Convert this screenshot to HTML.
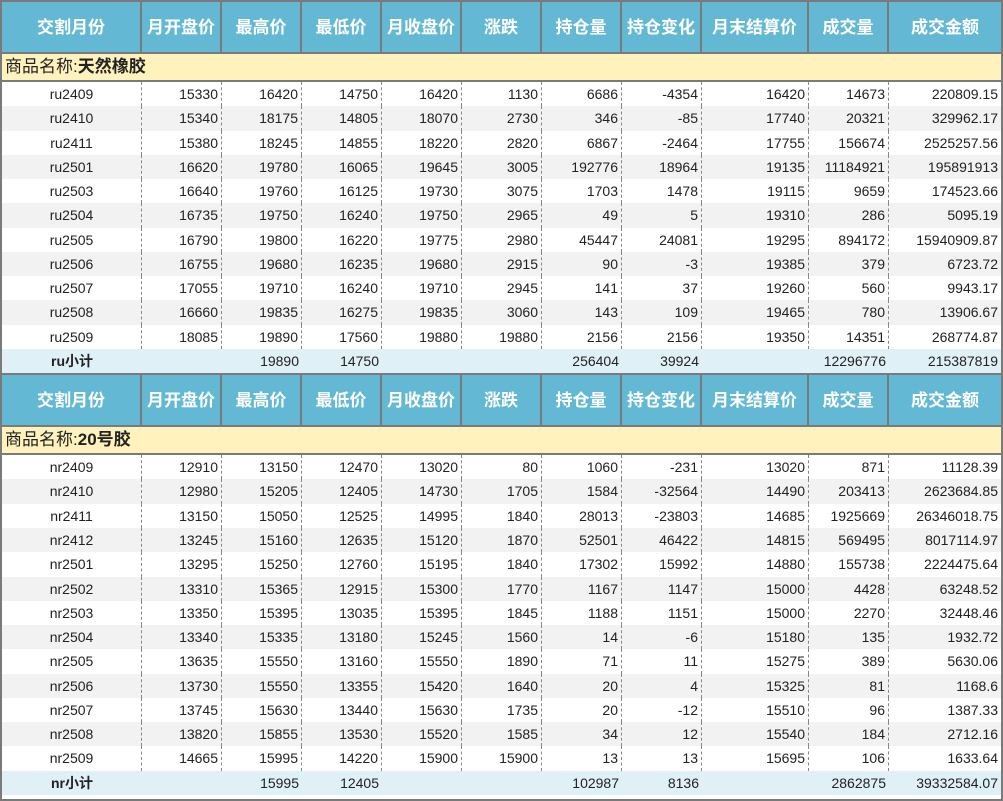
<!DOCTYPE html>
<html><head><meta charset="utf-8"><style>
*{margin:0;padding:0;box-sizing:border-box}
body{width:1003px;height:801px;overflow:hidden;background:#fff;font-family:"Liberation Sans","Noto Sans CJK SC",sans-serif}
.wrap{position:absolute;left:0;top:0;width:1003px;height:801px;border:2px solid #7a7a7a;border-bottom-width:2px}
.r{display:flex;width:999px}
.r>div{flex:none;height:100%;overflow:hidden;white-space:nowrap}
.c1{width:140px}.c{width:80px}.c9{width:107px}.c11{width:112px}
.h{height:52px;background:#63b8d3;border-bottom:2px solid #7a7a7a}
.h>div{color:#fff;font-weight:bold;font-size:17px;line-height:51px;text-align:center;border-right:2px solid #7a7a7a}
.h>div:last-child{border-right:none}
.p{height:28px;background:#fff2bd;border-bottom:2px solid #7a7a7a;font-size:17px;line-height:26px;padding-left:3px;color:#222}
.p b{font-weight:bold}
.d{height:24.27px;font-size:14px;line-height:24px;color:#222}
.d.s2{height:24.28px}
.d:nth-child(odd){background:#fff}
.d>div{text-align:right;padding-right:3px;border-right:1px dashed #888}
.d>div:first-child{text-align:center;padding-right:0}
.d>div:last-child{border-right:none}
.z{background:#f2f2f2!important}
.t{background:#dff0f7!important}
.t>div{border-right:none!important}
.t>div:first-child{font-weight:bold}
.sep{height:2px;background:#7a7a7a;width:999px}
</style></head><body><div class="wrap">
<div class="r h"><div class="c1">交割月份</div><div class="c">月开盘价</div><div class="c">最高价</div><div class="c">最低价</div><div class="c">月收盘价</div><div class="c">涨跌</div><div class="c">持仓量</div><div class="c">持仓变化</div><div class="c9">月末结算价</div><div class="c">成交量</div><div class="c11">成交金额</div></div>
<div class="p">商品名称:<b>天然橡胶</b></div>
<div class="r d"><div class="c1">ru2409</div><div class="c">15330</div><div class="c">16420</div><div class="c">14750</div><div class="c">16420</div><div class="c">1130</div><div class="c">6686</div><div class="c">-4354</div><div class="c9">16420</div><div class="c">14673</div><div class="c11">220809.15</div></div>
<div class="r d z"><div class="c1">ru2410</div><div class="c">15340</div><div class="c">18175</div><div class="c">14805</div><div class="c">18070</div><div class="c">2730</div><div class="c">346</div><div class="c">-85</div><div class="c9">17740</div><div class="c">20321</div><div class="c11">329962.17</div></div>
<div class="r d"><div class="c1">ru2411</div><div class="c">15380</div><div class="c">18245</div><div class="c">14855</div><div class="c">18220</div><div class="c">2820</div><div class="c">6867</div><div class="c">-2464</div><div class="c9">17755</div><div class="c">156674</div><div class="c11">2525257.56</div></div>
<div class="r d z"><div class="c1">ru2501</div><div class="c">16620</div><div class="c">19780</div><div class="c">16065</div><div class="c">19645</div><div class="c">3005</div><div class="c">192776</div><div class="c">18964</div><div class="c9">19135</div><div class="c">11184921</div><div class="c11">195891913</div></div>
<div class="r d"><div class="c1">ru2503</div><div class="c">16640</div><div class="c">19760</div><div class="c">16125</div><div class="c">19730</div><div class="c">3075</div><div class="c">1703</div><div class="c">1478</div><div class="c9">19115</div><div class="c">9659</div><div class="c11">174523.66</div></div>
<div class="r d z"><div class="c1">ru2504</div><div class="c">16735</div><div class="c">19750</div><div class="c">16240</div><div class="c">19750</div><div class="c">2965</div><div class="c">49</div><div class="c">5</div><div class="c9">19310</div><div class="c">286</div><div class="c11">5095.19</div></div>
<div class="r d"><div class="c1">ru2505</div><div class="c">16790</div><div class="c">19800</div><div class="c">16220</div><div class="c">19775</div><div class="c">2980</div><div class="c">45447</div><div class="c">24081</div><div class="c9">19295</div><div class="c">894172</div><div class="c11">15940909.87</div></div>
<div class="r d z"><div class="c1">ru2506</div><div class="c">16755</div><div class="c">19680</div><div class="c">16235</div><div class="c">19680</div><div class="c">2915</div><div class="c">90</div><div class="c">-3</div><div class="c9">19385</div><div class="c">379</div><div class="c11">6723.72</div></div>
<div class="r d"><div class="c1">ru2507</div><div class="c">17055</div><div class="c">19710</div><div class="c">16240</div><div class="c">19710</div><div class="c">2945</div><div class="c">141</div><div class="c">37</div><div class="c9">19260</div><div class="c">560</div><div class="c11">9943.17</div></div>
<div class="r d z"><div class="c1">ru2508</div><div class="c">16660</div><div class="c">19835</div><div class="c">16275</div><div class="c">19835</div><div class="c">3060</div><div class="c">143</div><div class="c">109</div><div class="c9">19465</div><div class="c">780</div><div class="c11">13906.67</div></div>
<div class="r d"><div class="c1">ru2509</div><div class="c">18085</div><div class="c">19890</div><div class="c">17560</div><div class="c">19880</div><div class="c">19880</div><div class="c">2156</div><div class="c">2156</div><div class="c9">19350</div><div class="c">14351</div><div class="c11">268774.87</div></div>
<div class="r d t"><div class="c1">ru小计</div><div class="c"></div><div class="c">19890</div><div class="c">14750</div><div class="c"></div><div class="c"></div><div class="c">256404</div><div class="c">39924</div><div class="c9"></div><div class="c">12296776</div><div class="c11">215387819</div></div>
<div class="sep"></div>
<div class="r h"><div class="c1">交割月份</div><div class="c">月开盘价</div><div class="c">最高价</div><div class="c">最低价</div><div class="c">月收盘价</div><div class="c">涨跌</div><div class="c">持仓量</div><div class="c">持仓变化</div><div class="c9">月末结算价</div><div class="c">成交量</div><div class="c11">成交金额</div></div>
<div class="p">商品名称:<b>20号胶</b></div>
<div class="r d s2"><div class="c1">nr2409</div><div class="c">12910</div><div class="c">13150</div><div class="c">12470</div><div class="c">13020</div><div class="c">80</div><div class="c">1060</div><div class="c">-231</div><div class="c9">13020</div><div class="c">871</div><div class="c11">11128.39</div></div>
<div class="r d s2 z"><div class="c1">nr2410</div><div class="c">12980</div><div class="c">15205</div><div class="c">12405</div><div class="c">14730</div><div class="c">1705</div><div class="c">1584</div><div class="c">-32564</div><div class="c9">14490</div><div class="c">203413</div><div class="c11">2623684.85</div></div>
<div class="r d s2"><div class="c1">nr2411</div><div class="c">13150</div><div class="c">15050</div><div class="c">12525</div><div class="c">14995</div><div class="c">1840</div><div class="c">28013</div><div class="c">-23803</div><div class="c9">14685</div><div class="c">1925669</div><div class="c11">26346018.75</div></div>
<div class="r d s2 z"><div class="c1">nr2412</div><div class="c">13245</div><div class="c">15160</div><div class="c">12635</div><div class="c">15120</div><div class="c">1870</div><div class="c">52501</div><div class="c">46422</div><div class="c9">14815</div><div class="c">569495</div><div class="c11">8017114.97</div></div>
<div class="r d s2"><div class="c1">nr2501</div><div class="c">13295</div><div class="c">15250</div><div class="c">12760</div><div class="c">15195</div><div class="c">1840</div><div class="c">17302</div><div class="c">15992</div><div class="c9">14880</div><div class="c">155738</div><div class="c11">2224475.64</div></div>
<div class="r d s2 z"><div class="c1">nr2502</div><div class="c">13310</div><div class="c">15365</div><div class="c">12915</div><div class="c">15300</div><div class="c">1770</div><div class="c">1167</div><div class="c">1147</div><div class="c9">15000</div><div class="c">4428</div><div class="c11">63248.52</div></div>
<div class="r d s2"><div class="c1">nr2503</div><div class="c">13350</div><div class="c">15395</div><div class="c">13035</div><div class="c">15395</div><div class="c">1845</div><div class="c">1188</div><div class="c">1151</div><div class="c9">15000</div><div class="c">2270</div><div class="c11">32448.46</div></div>
<div class="r d s2 z"><div class="c1">nr2504</div><div class="c">13340</div><div class="c">15335</div><div class="c">13180</div><div class="c">15245</div><div class="c">1560</div><div class="c">14</div><div class="c">-6</div><div class="c9">15180</div><div class="c">135</div><div class="c11">1932.72</div></div>
<div class="r d s2"><div class="c1">nr2505</div><div class="c">13635</div><div class="c">15550</div><div class="c">13160</div><div class="c">15550</div><div class="c">1890</div><div class="c">71</div><div class="c">11</div><div class="c9">15275</div><div class="c">389</div><div class="c11">5630.06</div></div>
<div class="r d s2 z"><div class="c1">nr2506</div><div class="c">13730</div><div class="c">15550</div><div class="c">13355</div><div class="c">15420</div><div class="c">1640</div><div class="c">20</div><div class="c">4</div><div class="c9">15325</div><div class="c">81</div><div class="c11">1168.6</div></div>
<div class="r d s2"><div class="c1">nr2507</div><div class="c">13745</div><div class="c">15630</div><div class="c">13440</div><div class="c">15630</div><div class="c">1735</div><div class="c">20</div><div class="c">-12</div><div class="c9">15510</div><div class="c">96</div><div class="c11">1387.33</div></div>
<div class="r d s2 z"><div class="c1">nr2508</div><div class="c">13820</div><div class="c">15855</div><div class="c">13530</div><div class="c">15520</div><div class="c">1585</div><div class="c">34</div><div class="c">12</div><div class="c9">15540</div><div class="c">184</div><div class="c11">2712.16</div></div>
<div class="r d s2"><div class="c1">nr2509</div><div class="c">14665</div><div class="c">15995</div><div class="c">14220</div><div class="c">15900</div><div class="c">15900</div><div class="c">13</div><div class="c">13</div><div class="c9">15695</div><div class="c">106</div><div class="c11">1633.64</div></div>
<div class="r d s2 t"><div class="c1">nr小计</div><div class="c"></div><div class="c">15995</div><div class="c">12405</div><div class="c"></div><div class="c"></div><div class="c">102987</div><div class="c">8136</div><div class="c9"></div><div class="c">2862875</div><div class="c11">39332584.07</div></div>
</div></body></html>
